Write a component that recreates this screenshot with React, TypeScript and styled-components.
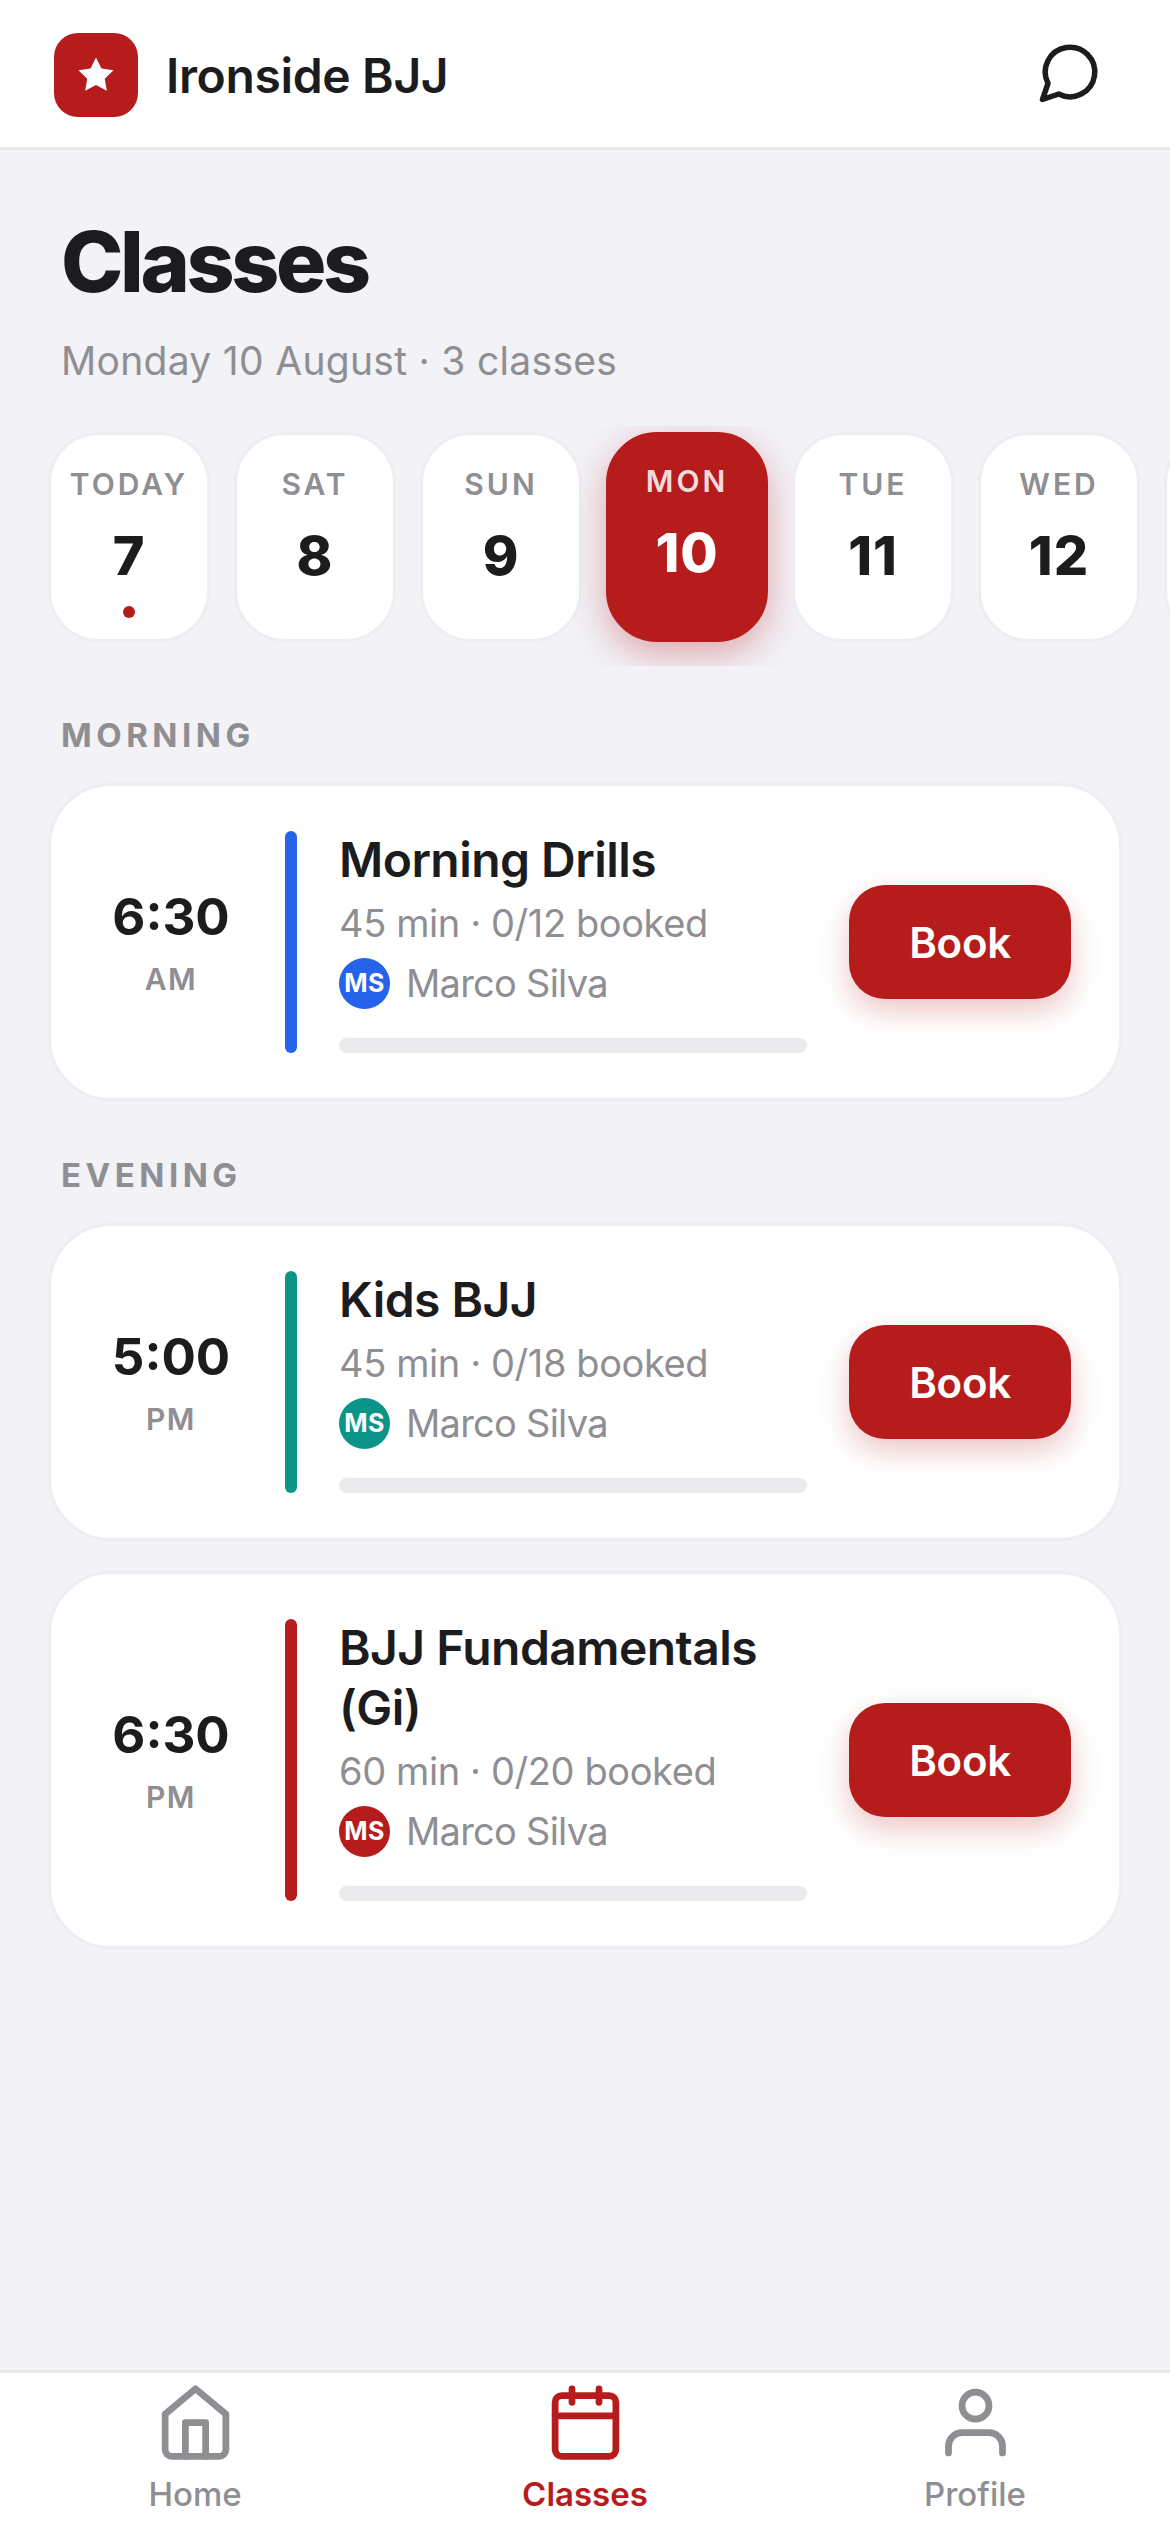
import React from 'react';
import styled, { createGlobalStyle } from 'styled-components';

const RED = '#b71c1c';
const INK = '#1c1c1e';
const GREY = '#8e8e93';

const GlobalStyle = createGlobalStyle`
  html, body {
    margin: 0;
    padding: 0;
    background: #f2f2f7;
    font-family: Inter, "Noto Sans", sans-serif;
  }
  * {
    box-sizing: border-box;
  }
`;

const Screen = styled.div`
  width: 1170px;
  height: 2532px;
  display: flex;
  flex-direction: column;
  overflow: hidden;
  background: #f2f2f7;
`;

const TopBar = styled.header`
  flex: none;
  height: 150px;
  padding: 33px 67px 30px 54px;
  display: flex;
  align-items: flex-start;
  justify-content: space-between;
  background: #fff;
  border-bottom: 3px solid #e9e7ea;
`;

const Brand = styled.div`
  display: flex;
  align-items: center;
  gap: 28px;
`;

const LogoMark = styled.div`
  width: 84px;
  height: 84px;
  border-radius: 24px;
  background: ${RED};
  display: flex;
  align-items: center;
  justify-content: center;
`;

const BrandName = styled.span`
  font-size: 48px;
  font-weight: 600;
  letter-spacing: -0.35px;
  color: ${INK};
`;

const ChatButton = styled.div`
  width: 66px;
  height: 66px;
  margin-top: 6px;
  color: ${INK};
`;

const Main = styled.main`
  flex: 1;
  min-height: 0;
`;

const PageHead = styled.div`
  padding: 61px 61px 0;
`;

const PageTitle = styled.h1`
  margin: 0;
  font-size: 84px;
  line-height: 102px;
  font-weight: 800;
  letter-spacing: -3.4px;
  color: ${INK};
`;

const PageSub = styled.p`
  margin: 24px 0 0;
  font-size: 39px;
  line-height: 48px;
  letter-spacing: 0.3px;
  color: ${GREY};
`;

const DayStrip = styled.div`
  margin-top: 41px;
  padding: 6px 48px 24px;
  display: flex;
  gap: 24px;
  overflow: hidden;
`;

const DayCard = styled.div<{ $selected?: boolean }>`
  flex: none;
  position: relative;
  width: 162px;
  height: 210px;
  padding-top: ${props => (props.$selected ? 28 : 31)}px;
  border-radius: 51px;
  display: flex;
  flex-direction: column;
  align-items: center;
  background: ${props => (props.$selected ? RED : '#fff')};
  border: 3px solid ${props => (props.$selected ? RED : '#eeeef2')};
  box-shadow: ${props => (props.$selected ? '0 12px 36px rgba(183, 28, 28, 0.35)' : 'none')};
`;

const DayName = styled.span<{ $selected?: boolean }>`
  font-size: 30px;
  line-height: 36px;
  font-weight: 600;
  letter-spacing: 3px;
  color: ${props => (props.$selected ? 'rgba(255, 255, 255, 0.85)' : GREY)};
`;

const DayNumber = styled.span<{ $selected?: boolean }>`
  margin-top: 21px;
  font-size: 54px;
  line-height: 66px;
  font-weight: 800;
  letter-spacing: 1px;
  color: ${props => (props.$selected ? '#fff' : INK)};
`;

const TodayDot = styled.span`
  position: absolute;
  left: 50%;
  bottom: 21px;
  width: 12px;
  height: 12px;
  margin-left: -6px;
  border-radius: 50%;
  background: ${RED};
`;

const SectionLabel = styled.h2`
  margin: 0;
  padding: 0 61px;
  font-size: 33px;
  line-height: 36px;
  font-weight: 700;
  letter-spacing: 4.5px;
  color: ${GREY};
`;

const Section = styled.section`
  margin-top: 56px;
  &:first-of-type {
    margin-top: 51px;
  }
`;

const CardList = styled.div`
  margin-top: 30px;
  padding: 0 48px;
  display: flex;
  flex-direction: column;
  gap: 30px;
`;

const ClassCard = styled.article`
  width: 1074px;
  padding: 45px 48px;
  display: flex;
  align-items: stretch;
  gap: 42px;
  background: #fff;
  border: 3px solid #eeeef2;
  border-radius: 63px;
`;

const TimeColumn = styled.div`
  flex: none;
  width: 144px;
  display: flex;
  flex-direction: column;
  align-items: center;
  justify-content: center;
`;

const TimeValue = styled.span`
  font-size: 51px;
  line-height: 60px;
  font-weight: 700;
  color: ${INK};
`;

const TimePeriod = styled.span`
  margin-top: 14px;
  font-size: 30px;
  line-height: 36px;
  font-weight: 600;
  letter-spacing: 1.5px;
  color: ${GREY};
`;

const AccentBar = styled.div<{ $color: string }>`
  flex: none;
  width: 12px;
  border-radius: 6px;
  background: ${props => props.$color};
`;

const Info = styled.div`
  flex: 1;
  min-width: 0;
  display: flex;
  flex-direction: column;
`;

const ClassName = styled.h3`
  margin: -1px 0 0;
  font-size: 48px;
  line-height: 60px;
  font-weight: 600;
  letter-spacing: -0.55px;
  color: ${INK};
`;

const Meta = styled.div`
  margin-top: 9px;
  font-size: 38px;
  line-height: 48px;
  letter-spacing: -0.4px;
  color: ${GREY};
`;

const CoachRow = styled.div`
  margin-top: 11px;
  display: flex;
  align-items: center;
  gap: 16px;
  font-size: 38px;
  line-height: 51px;
  letter-spacing: -0.75px;
  color: ${GREY};
`;

const Avatar = styled.span<{ $color: string }>`
  flex: none;
  width: 51px;
  height: 51px;
  border-radius: 50%;
  display: flex;
  align-items: center;
  justify-content: center;
  background: ${props => props.$color};
  color: #fff;
  font-size: 25px;
  font-weight: 700;
  letter-spacing: 0.5px;
`;

const Progress = styled.div`
  margin-top: 29px;
  height: 15px;
  border-radius: 8px;
  background: #ebebed;
`;

const BookButton = styled.button`
  flex: none;
  align-self: center;
  width: 222px;
  height: 114px;
  border: 0;
  border-radius: 36px;
  background: ${RED};
  color: #fff;
  font-family: inherit;
  font-size: 42px;
  font-weight: 600;
  letter-spacing: -0.3px;
  box-shadow: 0 12px 30px rgba(183, 28, 28, 0.25);
`;

const BottomNav = styled.nav`
  flex: none;
  height: 162px;
  display: grid;
  grid-template-columns: repeat(3, 390px);
  background: #fff;
  border-top: 3px solid #e9e7ea;
`;

const NavItem = styled.div<{ $active?: boolean }>`
  padding-top: 9px;
  display: flex;
  flex-direction: column;
  align-items: center;
  color: ${props => (props.$active ? RED : GREY)};
  font-size: 33px;
  line-height: 40px;
  font-weight: ${props => (props.$active ? 600 : 500)};
`;

const NavLabel = styled.span`
  margin-top: 11px;
`;

const StarIcon = () => (
  <svg width="42" height="42" viewBox="0 0 24 24" fill="#fff">
    <polygon points="12 2 15.09 8.26 22 9.27 17 14.14 18.18 21.02 12 17.77 5.82 21.02 7 14.14 2 9.27 8.91 8.26" />
  </svg>
);

const ChatIcon = () => (
  <svg width="66" height="66" viewBox="0 0 24 24" fill="none" stroke="currentColor" strokeWidth="2" strokeLinecap="round" strokeLinejoin="round">
    <path d="M7.9 20A9 9 0 1 0 4 16.1L2 22Z" />
  </svg>
);

const NavSvg = ({ children }: { children: React.ReactNode }) => (
  <svg width="81" height="81" viewBox="0 0 24 24" fill="none" stroke="currentColor" strokeWidth="2" strokeLinecap="round" strokeLinejoin="round">
    {children}
  </svg>
);

const days = [
  { name: 'TODAY', num: 7, today: true },
  { name: 'SAT', num: 8 },
  { name: 'SUN', num: 9 },
  { name: 'MON', num: 10, selected: true },
  { name: 'TUE', num: 11 },
  { name: 'WED', num: 12 },
];

interface ClassInfo {
  time: string;
  period: string;
  name: string;
  meta: string;
  color: string;
}

const morning: ClassInfo[] = [
  { time: '6:30', period: 'AM', name: 'Morning Drills', meta: '45 min · 0/12 booked', color: '#2563eb' },
];

const evening: ClassInfo[] = [
  { time: '5:00', period: 'PM', name: 'Kids BJJ', meta: '45 min · 0/18 booked', color: '#0d9488' },
  { time: '6:30', period: 'PM', name: 'BJJ Fundamentals (Gi)', meta: '60 min · 0/20 booked', color: RED },
];

const ClassRow = ({ item }: { item: ClassInfo }) => (
  <ClassCard>
    <TimeColumn>
      <TimeValue>{item.time}</TimeValue>
      <TimePeriod>{item.period}</TimePeriod>
    </TimeColumn>
    <AccentBar $color={item.color} />
    <Info>
      <ClassName>{item.name}</ClassName>
      <Meta>{item.meta}</Meta>
      <CoachRow>
        <Avatar $color={item.color}>MS</Avatar>
        Marco Silva
      </CoachRow>
      <Progress />
    </Info>
    <BookButton>Book</BookButton>
  </ClassCard>
);

const App = () => (
  <Screen>
    <GlobalStyle />
    <TopBar>
      <Brand>
        <LogoMark>
          <StarIcon />
        </LogoMark>
        <BrandName>Ironside BJJ</BrandName>
      </Brand>
      <ChatButton>
        <ChatIcon />
      </ChatButton>
    </TopBar>
    <Main>
      <PageHead>
        <PageTitle>Classes</PageTitle>
        <PageSub>Monday 10 August · 3 classes</PageSub>
      </PageHead>
      <DayStrip>
        {days.map(day => (
          <DayCard key={day.num} $selected={day.selected}>
            <DayName $selected={day.selected}>{day.name}</DayName>
            <DayNumber $selected={day.selected}>{day.num}</DayNumber>
            {day.today && <TodayDot />}
          </DayCard>
        ))}
        {/* next day only peeks in at the right edge */}
        <DayCard />
      </DayStrip>
      <Section>
        <SectionLabel>MORNING</SectionLabel>
        <CardList>
          {morning.map(item => <ClassRow key={item.name} item={item} />)}
        </CardList>
      </Section>
      <Section>
        <SectionLabel>EVENING</SectionLabel>
        <CardList>
          {evening.map(item => <ClassRow key={item.name} item={item} />)}
        </CardList>
      </Section>
    </Main>
    <BottomNav>
      <NavItem>
        <NavSvg>
          <path d="M3 9.5 12 2l9 7.5V20a2 2 0 0 1-2 2H5a2 2 0 0 1-2-2z" />
          <path d="M9 22V12h6v10" />
        </NavSvg>
        <NavLabel>Home</NavLabel>
      </NavItem>
      <NavItem $active>
        <NavSvg>
          <rect x="3" y="4" width="18" height="18" rx="2" />
          <path d="M8 2v4M16 2v4M3 10h18" />
        </NavSvg>
        <NavLabel>Classes</NavLabel>
      </NavItem>
      <NavItem>
        <NavSvg>
          <path d="M20 21v-2a4 4 0 0 0-4-4H8a4 4 0 0 0-4 4v2" />
          <circle cx="12" cy="7" r="4" />
        </NavSvg>
        <NavLabel>Profile</NavLabel>
      </NavItem>
    </BottomNav>
  </Screen>
);

export default App;
